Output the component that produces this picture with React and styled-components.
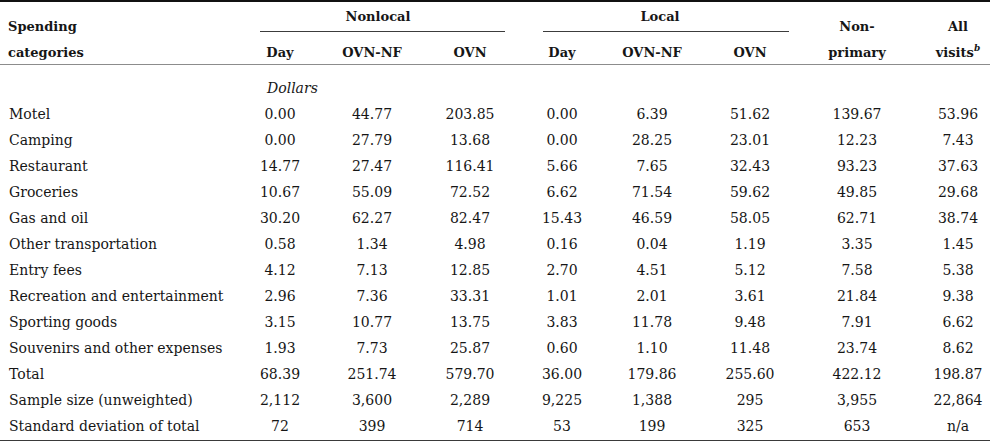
import styled, { createGlobalStyle } from "styled-components";

const GlobalStyle = createGlobalStyle`
  html, body {
    margin: 0;
    padding: 0;
    background: #ffffff;
    overflow: hidden;
  }
  body {
    font-family: "DejaVu Serif", "Liberation Serif", serif;
    color: #161616;
  }
`;

const columns = "234px 92px 92px 104px 80px 100px 96px 118px 84px";

const rows = [
  ["Motel", "0.00", "44.77", "203.85", "0.00", "6.39", "51.62", "139.67", "53.96"],
  ["Camping", "0.00", "27.79", "13.68", "0.00", "28.25", "23.01", "12.23", "7.43"],
  ["Restaurant", "14.77", "27.47", "116.41", "5.66", "7.65", "32.43", "93.23", "37.63"],
  ["Groceries", "10.67", "55.09", "72.52", "6.62", "71.54", "59.62", "49.85", "29.68"],
  ["Gas and oil", "30.20", "62.27", "82.47", "15.43", "46.59", "58.05", "62.71", "38.74"],
  ["Other transportation", "0.58", "1.34", "4.98", "0.16", "0.04", "1.19", "3.35", "1.45"],
  ["Entry fees", "4.12", "7.13", "12.85", "2.70", "4.51", "5.12", "7.58", "5.38"],
  ["Recreation and entertainment", "2.96", "7.36", "33.31", "1.01", "2.01", "3.61", "21.84", "9.38"],
  ["Sporting goods", "3.15", "10.77", "13.75", "3.83", "11.78", "9.48", "7.91", "6.62"],
  ["Souvenirs and other expenses", "1.93", "7.73", "25.87", "0.60", "1.10", "11.48", "23.74", "8.62"],
  ["Total", "68.39", "251.74", "579.70", "36.00", "179.86", "255.60", "422.12", "198.87"],
  ["Sample size (unweighted)", "2,112", "3,600", "2,289", "9,225", "1,388", "295", "3,955", "22,864"],
  ["Standard deviation of total", "72", "399", "714", "53", "199", "325", "653", "n/a"],
];

const subHeads = ["Day", "OVN-NF", "OVN", "Day", "OVN-NF", "OVN"];

const Table = styled.div`
  width: 1000px;
  font-size: 14px;
  border-bottom: 1px solid #3a3a3a;
  padding-bottom: 1px;
`;

const Head = styled.div`
  display: grid;
  grid-template-columns: ${columns};
  grid-template-rows: 36px 26px;
  border-top: 2px solid #111;
  border-bottom: 1px solid #8c8c8c;
  font-weight: bold;
  font-size: 13px;
`;

const TopCell = styled.div`
  grid-row: 1;
  grid-column: ${(p) => p.$col};
  align-self: end;
  line-height: 20px;
  padding-bottom: 1px;
  padding-left: ${(p) => (p.$left ? "8px" : "0")};
  text-align: ${(p) => (p.$left ? "left" : "center")};
`;

const SubCell = styled.div`
  grid-row: 2;
  line-height: 22px;
  padding-top: 4px;
  padding-left: ${(p) => (p.$left ? "8px" : "0")};
  text-align: ${(p) => (p.$left ? "left" : "center")};
`;

const Group = styled.div`
  grid-column: ${(p) => p.$span};
  grid-row: 1;
  display: flex;
  flex-direction: column;
  padding-top: 5px;
`;

const GroupTitle = styled.div`
  line-height: 20px;
  text-align: center;
`;

const GroupRule = styled.div`
  height: 1px;
  margin: 4px ${(p) => p.$right}px 0 ${(p) => p.$left}px;
  background: #3c3c3c;
`;

const Body = styled.div`
  display: grid;
  grid-template-columns: ${columns};
  grid-auto-rows: 26px;
  padding-top: 10px;
`;

const Unit = styled.div`
  grid-column: 2 / span 3;
  padding-left: 33px;
  font-style: italic;
  line-height: 26px;
`;

const Label = styled.div`
  grid-column: 1;
  padding-left: 9px;
  line-height: 26px;
  white-space: nowrap;
`;

const Num = styled.div`
  text-align: center;
  line-height: 26px;
`;

const Sup = styled.sup`
  font-style: italic;
  font-size: 9px;
  line-height: 0;
  vertical-align: 6px;
`;

export default function App() {
  return (
    <>
      <GlobalStyle />
      <Table>
        <Head>
          <TopCell $left $col="1">Spending</TopCell>
          <Group $span="2 / span 3">
            <GroupTitle>Nonlocal</GroupTitle>
            <GroupRule $left={26} $right={17} />
          </Group>
          <Group $span="5 / span 3">
            <GroupTitle>Local</GroupTitle>
            <GroupRule $left={21} $right={9} />
          </Group>
          <TopCell $col="8">Non-</TopCell>
          <TopCell $col="9">All</TopCell>

          <SubCell $left>categories</SubCell>
          {subHeads.map((h, i) => (
            <SubCell key={i}>{h}</SubCell>
          ))}
          <SubCell>primary</SubCell>
          <SubCell>
            visits<Sup>b</Sup>
          </SubCell>
        </Head>
        <Body>
          <Unit>Dollars</Unit>
          {rows.map((r) => [
            <Label key={r[0]}>{r[0]}</Label>,
            ...r.slice(1).map((v, i) => <Num key={r[0] + i}>{v}</Num>),
          ])}
        </Body>
      </Table>
    </>
  );
}
